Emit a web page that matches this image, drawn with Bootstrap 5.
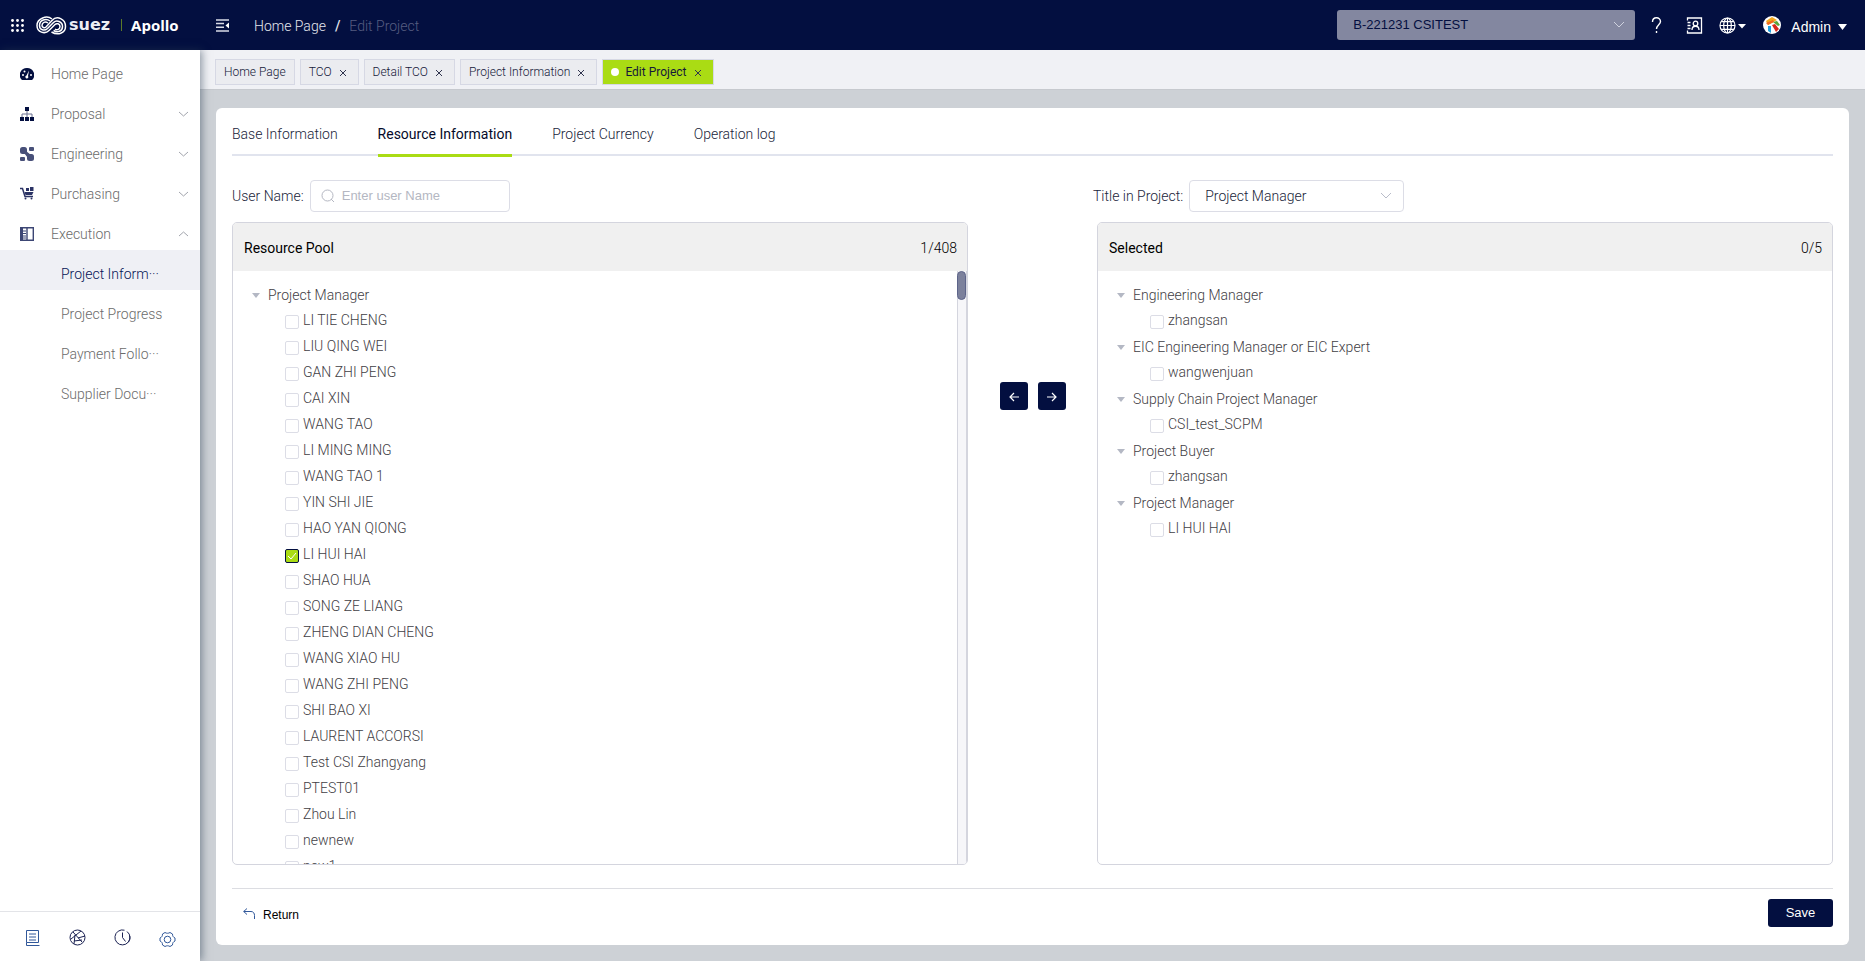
<!DOCTYPE html>
<html lang="en">
<head>
<meta charset="utf-8">
<meta name="viewport" content="width=device-width, initial-scale=1">
<title>Apollo - Edit Project</title>
<link rel="stylesheet" href="https://cdn.jsdelivr.net/npm/bootstrap@5.3.0/dist/css/bootstrap.min.css">
<style>
:root{--navy:#030f40;--lime:#aadc14;--line:#d4d5de}
body{font:300 14px/20px Roboto,"Liberation Sans",sans-serif;color:#20243a;background:#cdd1d6}
a{color:inherit;text-decoration:none}
.arial{font-family:"Liberation Sans",Arial,sans-serif;font-weight:400}
.topbar{height:50px;background:var(--navy);color:#fff}
.brand-zone{width:200px;padding-left:11px}
.suez{font:700 16px/20px "DejaVu Sans",sans-serif;margin-left:2px;color:#eceef5}
.brand-rule{width:1px;height:12px;background:#5c7a28;margin:0 9px 0 11px}
.apollo{font:700 15px/20px "Open Sans",sans-serif}
.crumbs{padding-left:24px;padding-top:2px;color:#e4e6ee}
.crumb-slash{margin:0 9px;font-weight:500}
.crumb-now{color:#565d80}
.project-select{width:298px;height:30px;border:0;border-radius:3px;background-color:#8387a0;color:var(--navy);font-size:13px;padding:0 40px 0 16px;background-image:url("data:image/svg+xml,%3Csvg xmlns='http://www.w3.org/2000/svg' viewBox='0 0 12 12'%3E%3Cpath d='M1 3l5 5 5-5' fill='none' stroke='%23cfd2de'/%3E%3C/svg%3E");background-size:12px;background-position:right 10px center}
.icon-btn{background:none;border:0;padding:0;color:inherit;line-height:1;display:flex;align-items:center}
.top-tools{gap:16px;padding-right:18px}
.account-name{margin:4px 7px 0 10px}
.sidebar{width:200px;background:#fff;box-shadow:2px 0 8px rgba(40,60,80,.5);z-index:2}
.side-link{height:40px;padding:7px 11px 0 20px;color:#6b6b6b;width:100%}
.side-link svg{flex:none}
.side-link .label{margin-left:17px}
.side-sub{height:40px;padding:7px 0 0 61px;color:#6b6b6b}
.side-sub.active{background:#eff0f5;color:#061556}
.side-foot{height:50px;border-top:1px solid #e3e4e8;padding:2px 24px 0 25px}
.tagbar{height:40px;background:#f0f1f5;padding:5px 0 0 15px;border-bottom:1px solid #c6c9ce;gap:5px}
.page-tag{height:26px;border:1px solid #d6d8e4;background:#ebecf0;font-size:12px;padding:0 8px;color:#16193a}
.page-tag .icon-btn{width:14px;margin-left:4px;justify-content:center;padding-top:2px}
.page-tag.current{background:var(--lime);font-weight:400}
.tag-dot{width:8px;height:8px;border-radius:50%;background:#fff;margin-right:6px}
.sheet{background:#fff;border-radius:6px;margin:18px 16px 16px;padding:0 16px}
.sheet-tabs{height:48px;border-bottom:2px solid #e1e4ee;gap:40px}
.sheet-tabs a{height:49px;padding-top:16px}
.sheet-tabs a.active{font-weight:400;color:#050a2a;border-bottom:3px solid var(--lime)}
.filters{margin-top:24px}
.mid-gap{width:121px}
.box{height:32px;border:1px solid #dcdde6;border-radius:4px;background-color:#fff}
.search-box{width:200px;padding:0 10px;margin-left:6px}
.search-box input{border:0;outline:0;padding:0;margin-left:7px;width:100%;font-size:13px;background:none}
.search-box input::placeholder{color:#b4b7c2;opacity:1}
.title-select{width:215px;font-size:14px;font-weight:300;padding:0 30px 0 15px;color:#20243a;margin-left:6px;background-image:url("data:image/svg+xml,%3Csvg xmlns='http://www.w3.org/2000/svg' viewBox='0 0 12 12'%3E%3Cpath d='M1 3l5 5 5-5' fill='none' stroke='%23b9bcc9'/%3E%3C/svg%3E");background-size:12px;background-position:right 11px center}
.panels{margin-top:10px;min-height:0}
.pool{flex:1 1 0;min-width:0;border:1px solid var(--line);border-radius:5px;overflow:hidden}
.pool-head{height:48px;background:#f0f0f0;padding:2px 10px 0 11px;color:#000;flex:none}
.pool-head h2{font-size:14px;font-weight:400;line-height:20px;margin:0}
.tree{padding-top:11px;overflow:hidden;color:#3f4045}
.group-row{height:26px;padding-left:19px;gap:8px}
.leaf{height:26px;padding-left:52px;gap:4px}
.leaf .form-check-input{width:14px;height:14px;margin:2px 0 0;border:1px solid #dcdde6;border-radius:2px;float:none;flex:none}
.leaf .form-check-input:checked{background-color:var(--lime);border-color:var(--navy);background-image:url("data:image/svg+xml,%3Csvg xmlns='http://www.w3.org/2000/svg' viewBox='0 0 12 12'%3E%3Cpath d='M2 6l3 3 5-6' fill='none' stroke='%23fff'/%3E%3C/svg%3E")}
.leaf label{margin-top:-2px}
.track{width:10px;background:#f6f6f9;border-left:1px solid var(--line);border-right:1px solid var(--line);flex:none}
.thumb{width:9px;margin-left:-1px;height:29px;border-radius:5px;background:#7c819c;border:1px solid #5d648a}
.movers{width:129px;gap:10px;padding-top:160px}
.movers button,.save{background:var(--navy);color:#fff;border:0;border-radius:3px}
.movers button{width:28px;height:28px;padding:0}
.sheet-foot{margin-top:23px;border-top:1px solid #dcdde2;padding:10px 0 18px}
.save{width:65px;height:28px;padding:0;font-size:13px}
.back{margin-left:11px;padding-top:3px;color:#000;font-size:12px}
</style>
</head>
<body class="vh-100 d-flex flex-column overflow-hidden">
<header class="topbar d-flex align-items-center flex-shrink-0">
  <div class="brand-zone d-flex align-items-center flex-shrink-0">
    <button class="icon-btn" aria-label="Applications"><svg width="13" height="13" fill="#fff"><g id="r"><circle cx="1.5" cy="1.5" r="1.4"/><circle cx="6.5" cy="1.5" r="1.4"/><circle cx="11.5" cy="1.5" r="1.4"/></g><use href="#r" y="5"/><use href="#r" y="10"/></svg></button>
    <svg class="ms-2 ps-1" style="box-sizing:content-box" width="31" height="19" viewBox="0 0 31 19" fill="none" stroke="#fff" stroke-width="1.5"><path d="M16 3C11-1 1 2 1 9.500c0 7 8 9 12 5l6-6c1.500-1.500 5-1 5 2s-3 4-5 2.500"/><path d="M14 5C10 2 3.500 4 3.500 9.500c0 4.500 5 6 8 3l6-6c3-3 9-1 9 4 0 5-5 6.500-9 4"/><path d="M12 7C9 5 6 6.500 6 9.500c0 2 2.500 3 4 1.500l6-6.500C21-1 29.500 3 29.500 10.500c0 7-8 9-14 5.500"/></svg>
    <span class="suez">suez</span><span class="brand-rule"></span><span class="apollo">Apollo</span>
  </div>
  <button class="icon-btn ms-3" aria-label="Collapse menu"><svg width="14" height="13" fill="none" stroke="#d9dbe6" stroke-width="1.500"><path d="M0 1h13M0 4.600h8M0 8.300h8M0 12h13"/><path d="M13 3.500v6L9.500 6.500z" fill="#fff" stroke="none"/></svg></button>
  <nav class="crumbs d-flex" aria-label="breadcrumb"><a href="#">Home Page</a><span class="crumb-slash">/</span><span class="crumb-now">Edit Project</span></nav>
  <div class="top-tools ms-auto d-flex align-items-center">
    <select class="form-select project-select arial" aria-label="Project"><option>B-221231 CSITEST</option></select>
    <button class="icon-btn me-2" aria-label="Help"><svg width="11" height="17" fill="none" stroke="#fff" stroke-width="1.400"><path d="M1.500 5C1.500-.5 9.500-.5 9.500 4.500c0 3-4 3.500-4 7.500"/><path d="M5.500 14v2"/></svg></button>
    <button class="icon-btn" aria-label="Contacts"><svg width="17" height="17" fill="none" stroke="#fff" stroke-width="1.300"><path d="M1.500 3.500V1h14v15h-14v-2.500"/><path d="M1.500 5.500h3M1.500 8.500h3M1.500 11.500h3"/><circle cx="9.500" cy="6.500" r="2.300"/><path d="M6 13c0-5 7-5 7 0"/></svg></button>
    <button class="icon-btn" aria-label="Language"><svg width="28" height="17" fill="none" stroke="#fff" stroke-width="1.200"><circle cx="8.500" cy="8.500" r="7.500"/><ellipse cx="8.500" cy="8.500" rx="3.800" ry="7.500"/><path d="M8.500 1v15M1 8.500h15M2.200 4.700h12.600M2.200 12.300h12.600"/><path d="M19 7h8l-4 4.500z" fill="#fff" stroke="none"/></svg></button>
    <button class="icon-btn arial" aria-label="Account: Admin"><svg width="18" height="18"><circle cx="9" cy="9" r="9" fill="#fff"/><path d="M3 5l6-4 5 3-9 5z" fill="#f4a81c"/><path d="M10 6l4-1 3 4-2 1z" fill="#58a53a"/><path d="M5 10h3v7l-3-2z" fill="#1fa0e0"/><path d="M9 9l3-1 4 5-3 3z" fill="#d9261c"/><path d="M3 7l7-3 1 2-6 3z" fill="#f26b1e"/></svg><span class="account-name">Admin</span><svg width="9" height="6" fill="#fff" class="mt-1"><path d="M0 0h9L4.500 6z"/></svg></button>
  </div>
</header>
<div class="d-flex flex-grow-1" style="min-height:0">
  <aside class="sidebar d-flex flex-column flex-shrink-0 position-relative">
    <nav class="flex-grow-1" id="side"></nav>
    <div class="side-foot d-flex justify-content-between align-items-center">
      <button class="icon-btn" aria-label="Documents"><svg width="16" height="16" fill="none" stroke="#31589a"><path d="M1.500.5h12v12h-12zM1.500 12.500v3h13M4 4h7M4 7h7M4 10h7"/></svg></button>
      <button class="icon-btn" aria-label="Network"><svg width="17" height="17" fill="none" stroke="#1a2152"><circle cx="8.500" cy="8.500" r="7.500"/><path d="M4 3l9 10M12 2L2 10M6 6l-1 9M9 9l7-2M5 12l8-1"/></svg></button>
      <button class="icon-btn" aria-label="History"><svg width="17" height="17" fill="none" stroke="#1a2152"><path d="M10.500 1.200A7.500 7.500 0 1 0 15.800 7M13 2.500a7.500 7.500 0 0 1 3 6c0 2-1 4-2 5M8.500 3.500v5l3 4"/></svg></button>
      <button class="icon-btn pt-1" aria-label="Settings"><svg width="17" height="17" fill="none" stroke="#31589a"><circle cx="8.500" cy="8.500" r="3.300"/><path d="M6 1.500c1.500 1 3.500 1 5 0l2.500 1.500c0 2 .5 3 2.500 4v3c-2 1-2.500 2-2.500 4L11 15.500c-1.500-1-3.500-1-5 0L3.500 14c0-2-.5-3-2.500-4V7c2-1 2.500-2 2.500-4z"/></svg></button>
    </div>
  </aside>
  <div class="flex-grow-1 d-flex flex-column" style="min-width:0">
    <div class="tagbar d-flex align-items-center flex-shrink-0" id="tags"></div>
    <main class="sheet flex-grow-1 d-flex flex-column" style="min-height:0">
      <nav class="sheet-tabs d-flex flex-shrink-0"><a href="#">Base Information</a><a href="#" class="active" aria-current="page">Resource Information</a><a href="#">Project Currency</a><a href="#">Operation log</a></nav>
      <div class="filters d-flex flex-shrink-0">
        <div class="d-flex align-items-center col">
          <label for="user">User Name:</label>
          <div class="box search-box d-flex align-items-center"><svg class="flex-shrink-0" width="14" height="14" fill="none" stroke="#b4b7c2"><circle cx="6.500" cy="6.500" r="5.500"/><path d="M10 10l3 3"/></svg><input id="user" type="text" class="arial" placeholder="Enter user Name"></div>
        </div>
        <div class="mid-gap"></div>
        <div class="d-flex align-items-center col">
          <label for="title">Title in Project:</label>
          <select id="title" class="form-select box title-select"><option>Project Manager</option></select>
        </div>
      </div>
      <div class="panels d-flex flex-grow-1">
        <section class="pool d-flex flex-column">
          <div class="pool-head d-flex justify-content-between align-items-center"><h2>Resource Pool</h2><span>1/408</span></div>
          <div class="d-flex flex-grow-1" style="min-height:0"><div class="tree flex-grow-1" id="pool"></div><div class="track"><div class="thumb"></div></div></div>
        </section>
        <div class="movers d-flex align-items-start justify-content-center">
          <button aria-label="Move left"><svg width="12" height="12" fill="none" stroke="#fff" stroke-width="1.200"><path d="M11 6H2M6 2L2 6l4 4"/></svg></button>
          <button aria-label="Move right"><svg width="12" height="12" fill="none" stroke="#fff" stroke-width="1.200"><path d="M1 6h9M6 2l4 4-4 4"/></svg></button>
        </div>
        <section class="pool d-flex flex-column">
          <div class="pool-head d-flex justify-content-between align-items-center"><h2>Selected</h2><span>0/5</span></div>
          <div class="tree flex-grow-1" id="selected"></div>
        </section>
      </div>
      <div class="sheet-foot d-flex align-items-center justify-content-between flex-shrink-0">
        <a href="#" class="back arial d-flex align-items-center"><svg class="me-2" width="12" height="14" fill="none" stroke="#31589a"><path d="M4 .5L.7 3.500 4 6.500M.7 3.500H8c2.500 0 3.500 2 3.500 4V11"/></svg>Return</a>
        <button class="save arial">Save</button>
      </div>
    </main>
  </div>
</div>
<script>
const menuIcons = {
  home: '<path d="M7 1a7 7 0 0 0-6 11l1 1h10l1-1A7 7 0 0 0 7 1z" fill="#030f40"/><g fill="#fff"><circle cx="3" cy="8" r="1"/><circle cx="4.500" cy="4.500" r="1"/><circle cx="11" cy="8" r="1"/><path d="M9 3.500L8 9a1.500 1.500 0 1 1-1.500-.5z"/></g>',
  proposal: '<path d="M5 0h4v4H5zM0 10h4v4H0zM5 10h4v4H5zM10 10h4v4h-4z" fill="#030f40"/><path d="M7 4v6M2 10V7h10v3" fill="none" stroke="#6b7192"/>',
  engineering: '<g fill="#485079"><rect width="7" height="7" rx="2.500"/><rect x="9" width="5" height="4" rx="1"/><rect y="10" width="5" height="4" rx="1"/><rect x="7" y="7" width="7" height="7" rx="2.500"/><path d="M4 6l2-2 5 4-3 3z"/></g>',
  purchasing: '<path d="M0 1.500h2.500L5 9.500h8" fill="none" stroke="#2b3365" stroke-width="1.500"/><path d="M4.500 5h9l-1.500 3H5.500zM6 1h3v3H6zM10 0h3.500v4H10z" fill="#2b3365"/><circle cx="5.500" cy="11.500" r="1" fill="#2b3365"/><circle cx="11.500" cy="11.500" r="1" fill="#2b3365"/>',
  execution: '<path d="M.7.700h12.600v12.600H.7zM7 1v12" fill="none" stroke="#3c4674" stroke-width="1.400"/><path d="M1 1h2v12H1z" fill="#3c4674"/><path d="M3 4h3M3 6.500h3M3 9h3M3 11h3" stroke="#3c4674"/>'
};
const menu = [['home','Home Page',''],['proposal','Proposal','M1 1l4.500 4L10 1'],['engineering','Engineering','M1 1l4.500 4L10 1'],['purchasing','Purchasing','M1 1l4.500 4L10 1'],['execution','Execution','M1 5l4.500-4L10 5']];
document.getElementById('side').innerHTML =
  menu.map(([k,t,c]) => `<a href="#" class="side-link d-flex align-items-center"><svg width="14" height="14">${menuIcons[k]}</svg><span class="label">${t}</span>${c?`<svg class="ms-auto" width="11" height="6" fill="none" stroke="#a2a5ad"><path d="${c}"/></svg>`:''}</a>`).join('') +
  ['Project Inform···','Project Progress','Payment Follo···','Supplier Docu···'].map((t,i) => `<a href="#" class="side-sub d-flex align-items-center${i?'':' active'}">${t}</a>`).join('');

const cross = t => `<button class="icon-btn" aria-label="Close ${t}"><svg width="8" height="8" fill="none" stroke="#30344f"><path d="M1 1l6 6M7 1L1 7"/></svg></button>`;
document.getElementById('tags').innerHTML = ['Home Page','TCO','Detail TCO','Project Information','Edit Project'].map((t,i) =>
  `<div class="page-tag d-flex align-items-center${i==4?' current':''}">${i==4?'<span class="tag-dot"></span>':''}<a href="#">${t}</a>${i?cross(t):''}</div>`).join('');

let n = 0;
const group = t => `<div class="group-row d-flex align-items-center"><svg width="8" height="5"><path d="M0 0h8L4 5z" fill="#b4b8c4"/></svg>${t}</div>`;
const leaf = (t,on) => `<div class="leaf d-flex align-items-center"><input class="form-check-input" type="checkbox" id="p${++n}"${on?' checked':''}><label for="p${n}">${t}</label></div>`;
const people = ['LI TIE CHENG','LIU QING WEI','GAN ZHI PENG','CAI XIN','WANG TAO','LI MING MING','WANG TAO 1','YIN SHI JIE','HAO YAN QIONG','LI HUI HAI','SHAO HUA','SONG ZE LIANG','ZHENG DIAN CHENG','WANG XIAO HU','WANG ZHI PENG','SHI BAO XI','LAURENT ACCORSI','Test CSI Zhangyang','PTEST01','Zhou Lin','newnew','new1'];
document.getElementById('pool').innerHTML = group('Project Manager') + people.map((p,i) => leaf(p, i==9)).join('');
document.getElementById('selected').innerHTML = [['Engineering Manager','zhangsan'],['EIC Engineering Manager or EIC Expert','wangwenjuan'],['Supply Chain Project Manager','CSI_test_SCPM'],['Project Buyer','zhangsan'],['Project Manager','LI HUI HAI']].map(([g,p]) => group(g) + leaf(p)).join('');
</script>
<script src="https://cdn.jsdelivr.net/npm/bootstrap@5.3.0/dist/js/bootstrap.bundle.min.js"></script>
</body>
</html>
